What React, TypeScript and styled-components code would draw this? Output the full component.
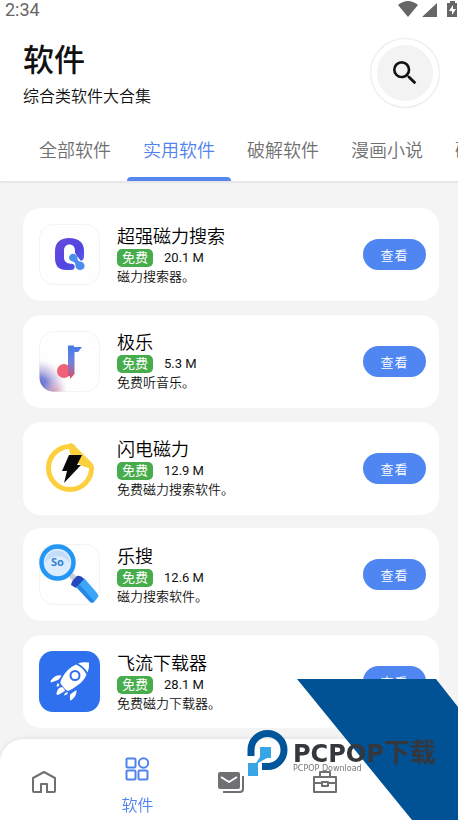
import React from "react";
import styled, { createGlobalStyle } from "styled-components";
import { MdSearch } from "react-icons/md";

const GlobalStyle = createGlobalStyle`
  * { box-sizing: border-box; }
  body {
    margin: 0;
    background: #f4f4f4;
    color: #111;
    font-family: Roboto, "Noto Sans CJK SC", sans-serif;
  }
  button { font-family: inherit; border: 0; padding: 0; cursor: pointer; }
`;

const Page = styled.div`
  min-height: 100vh;
  display: flex;
  flex-direction: column;
  overflow: hidden;
`;

const Header = styled.header`
  background: #fff;
  border-bottom: 1px solid #e4e4e4;
  box-shadow: 0 1px 2px rgba(0, 0, 0, 0.06);
`;

const StatusBar = styled.div`
  height: 20px;
  display: flex;
  align-items: center;
  justify-content: space-between;
  padding-left: 5px;
  color: #666;
  font-size: 18px;
  line-height: 20px;
`;

const StatusIcons = styled.svg`
  width: 60px;
  height: 20px;
  fill: #666;
`;

const TitleRow = styled.div`
  display: flex;
  align-items: center;
  justify-content: space-between;
  padding: 16px 19px 0 23px;
`;

const Title = styled.h1`
  margin: 0;
  padding-top: 3px;
  font-size: 31px;
  line-height: 44px;
  font-weight: 500;
`;

const Subtitle = styled.p`
  margin: 0;
  padding-top: 2px;
  font-size: 16px;
  line-height: 24px;
  font-weight: 350;
`;

const SearchButton = styled.button`
  width: 68px;
  height: 68px;
  border: 6px solid #fff;
  border-radius: 50%;
  background: #f3f3f3;
  box-shadow: 0 0 2px rgba(0, 0, 0, 0.25);
  display: grid;
  place-items: center;
  color: #111;
  font-size: 32px;
`;

const Tabs = styled.nav`
  display: flex;
  padding-left: 23px;
  margin-top: 11px;
  overflow: hidden;
`;

const Tab = styled.button<{ $active?: boolean }>`
  flex: none;
  height: 61px;
  padding: 0 16px;
  background: none;
  font-size: 18px;
  line-height: 24px;
  font-weight: 350;
  color: ${(p) => (p.$active ? "#4f83ee" : "#707070")};
  position: relative;
  &::after {
    content: "";
    display: ${(p) => (p.$active ? "block" : "none")};
    position: absolute;
    left: 0;
    right: 0;
    bottom: 0;
    height: 4px;
    border-radius: 4px 4px 0 0;
    background: #5687ee;
  }
`;

const AppList = styled.ul`
  flex: 1;
  list-style: none;
  margin: 0;
  padding: 26px 19px 92px 23px;
  display: flex;
  flex-direction: column;
  justify-content: space-between;
  gap: 13px;
`;

const Card = styled.li`
  display: flex;
  align-items: center;
  gap: 17px;
  padding: 16px 13px 16px 16px;
  background: #fff;
  border-radius: 18px;
`;

const AppIcon = styled.svg`
  flex: none;
  width: 61px;
  height: 61px;
`;

const Info = styled.div`
  flex: 1;
  margin-bottom: -2px;
`;

const Name = styled.h2`
  margin: 0;
  font-size: 18px;
  line-height: 24px;
  font-weight: 350;
  color: #000;
`;

const Meta = styled.div`
  display: flex;
  align-items: center;
  gap: 11px;
  font-size: 13px;
  line-height: 18px;
`;

const Badge = styled.span`
  padding: 0 5px;
  border-radius: 5px;
  background: #47ac4b;
  color: #fff;
`;

const Description = styled.p`
  margin: 0;
  font-size: 13px;
  line-height: 20px;
  font-weight: 350;
`;

const ViewButton = styled.button`
  width: 63px;
  height: 31px;
  border-radius: 16px;
  background: #5086f2;
  color: #fff;
  font-size: 13px;
  font-weight: 350;
  letter-spacing: 1px;
`;

const BottomBar = styled.footer`
  position: fixed;
  left: 0;
  right: 0;
  bottom: 0;
  background: #fff;
  border-radius: 24px 24px 0 0;
  box-shadow: 0 -1px 5px rgba(0, 0, 0, 0.08);
`;

const NavItems = styled.nav`
  display: grid;
  grid-template-columns: repeat(5, 1fr);
  height: 81px;
  margin: 0 -7px 0 -3px;
`;

const NavButton = styled.button<{ $active?: boolean }>`
  display: flex;
  flex-direction: column;
  align-items: center;
  justify-content: center;
  gap: 13px;
  padding-top: ${(p) => (p.$active ? 16 : 5)}px;
  background: none;
  font-size: 16px;
  line-height: 24px;
  font-weight: 350;
  color: ${(p) => (p.$active ? "#4f83ee" : "#707073")};
`;

const NavIcon = styled.svg`
  flex: none;
  width: 28px;
  height: 24px;
  fill: none;
  stroke: currentColor;
  stroke-width: 2;
  stroke-linejoin: round;
`;

const Watermark = styled.div`
  position: fixed;
  right: 0;
  bottom: 0;
  width: 211px;
  height: 141px;
  pointer-events: none;
`;

const Ribbon = styled.svg`
  position: absolute;
  inset: 0;
  width: 211px;
  height: 141px;
`;

const Brand = styled.div`
  position: absolute;
  left: 46px;
  top: 62px;
  white-space: nowrap;
  color: #34383c;
`;

const BrandName = styled.div`
  font: 700 24px/19px "DejaVu Sans", sans-serif;
`;

const BrandSuffix = styled.span`
  font: 700 26px/19px "Noto Sans CJK SC", sans-serif;
`;

const BrandNote = styled.div`
  font: 8px/10px "DejaVu Sans", sans-serif;
  color: #777;
`;

const Frame = ({ fill = "#fefefe" }: { fill?: string }) => (
  <rect x="0.5" y="0.5" width="60" height="60" rx="14" fill={fill} stroke="#f4f3f3" />
);

const MagnetIcon = () => (
  <AppIcon viewBox="0 0 61 61">
    <defs>
      <linearGradient id="magnet" x1="0" y1="0" x2="1" y2="1">
        <stop offset="0" stopColor="#6a4ad8" />
        <stop offset="0.6" stopColor="#5145e2" />
        <stop offset="1" stopColor="#4f6ae8" />
      </linearGradient>
    </defs>
    <Frame />
    <path
      d="M32 46H27C19 46 16 41 16 34V27C16 19 21 14 30 14C40 14 45 19 45 27V32Q45 36 42 37L38 32Q37 30 36 29V27C36 23 34 20.500 30.500 20.500C27 20.500 25 23 25 27V33C25 37 27 39 30 39.500L34 40Q37 42 35 45Q34 46 32 46Z"
      fill="url(#magnet)"
    />
    <path
      d="M30 34C30 30 35 28 38 32C39 35 38 37 41 37.500C47 38 47 46 41.500 46C36 46 37 42 36 39C35 37 31 38 30 34Z"
      fill="#4c8cec"
    />
  </AppIcon>
);

const MusicIcon = () => (
  <AppIcon viewBox="0 0 61 61">
    <defs>
      <radialGradient id="glow" gradientUnits="userSpaceOnUse" cx="-1" cy="56" r="30">
        <stop offset="0" stopColor="#4a5fd0" />
        <stop offset="0.35" stopColor="#7379d2" stopOpacity="0.9" />
        <stop offset="0.7" stopColor="#c3b4dc" stopOpacity="0.5" />
        <stop offset="1" stopColor="#fff" stopOpacity="0" />
      </radialGradient>
      <radialGradient id="blush" gradientUnits="userSpaceOnUse" cx="15" cy="62" r="14">
        <stop offset="0" stopColor="#d88ba6" stopOpacity="0.8" />
        <stop offset="1" stopColor="#f6d0d6" stopOpacity="0" />
      </radialGradient>
      <linearGradient id="note" x1="0" y1="0" x2="0" y2="1">
        <stop offset="0" stopColor="#417be8" />
        <stop offset="0.5" stopColor="#7180dd" />
        <stop offset="1" stopColor="#df4b64" />
      </linearGradient>
    </defs>
    <Frame />
    <rect x="0.5" y="0.5" width="60" height="60" rx="14" fill="url(#glow)" />
    <rect x="0.5" y="0.5" width="60" height="60" rx="14" fill="url(#blush)" />
    <circle cx="25" cy="40" r="7" fill="#ed5268" fillOpacity="0.9" />
    <path d="M29 14.500H35V16H43L39 21H35.500V43L31 48V45H29Z" fill="url(#note)" />
  </AppIcon>
);

const BoltIcon = () => (
  <AppIcon viewBox="0 0 61 61">
    <circle cx="31" cy="30" r="21.5" fill="#fff" stroke="#fcd03c" strokeWidth="5" />
    <path d="M31 2L61 2V30H54Z" fill="#fff" />
    <path d="M31 5Q34 5 37 9L53 25Q55 27 55 30C49 31 40 28 34 20C30 15 29 10 31 5Z" fill="#fcd03c" />
    <path d="M30 17H43L38 27H42L25 45L28 33H23Z" fill="#080808" />
  </AppIcon>
);

const MagnifierIcon = () => (
  <AppIcon viewBox="0 0 61 61">
    <Frame />
    <path d="M30 33L34 29L40 35L36 39Z" fill="#c9cdd4" />
    <path d="M37 40L52 58Q54 60 56 57L59 53Q60 52 58 49L45 34Z" fill="#3ba6f8" />
    <path d="M32 41Q32 38 35 35L38 32Q42 31 45 35L37 44Z" fill="#2447bc" />
    <path d="M37 43L51 58Q54 60 55 57L41 41Z" fill="#2686e5" />
    <circle cx="18.5" cy="18.5" r="16" fill="#dcecff" stroke="#2496f3" strokeWidth="4.5" />
    <path d="M6 19A12.5 12.5 0 0 1 31 19C26 10 12 10 6 19Z" fill="#c2dcfa" />
    <text x="18.5" y="22" textAnchor="middle" fontFamily="Open Sans, sans-serif" fontWeight="700" fontSize="11" fill="#2e82d2">
      So
    </text>
  </AppIcon>
);

const RocketIcon = () => (
  <AppIcon viewBox="0 0 61 61">
    <rect width="61" height="61" rx="14" fill="#2f70ee" />
    <g fill="#fff">
      <path d="M39 12.500Q44 10.500 50 11.500Q50.500 17 48.500 21.500Q45 15.500 39 12.500Z" />
      <path d="M37 13.500Q44 16.500 47.500 23.500Q45 30 39 34Q34 38 29 40Q27 40 21.500 32.500Q21 31 22.500 28Q27 18 37 13.500Z" />
      <path d="M22.500 24.500Q21 28 19 29L12 31.500Q11 31 12 29.500Q16 23.500 22.500 24.500Z" />
      <path d="M37.500 39Q38 45 32 49.500Q30.500 49.500 31 47Q30 44 33 42Z" />
      <path d="M23 36Q26 38 26 40L19 44Q17 44 17.500 42Q19 36 23 36Z" />
      <path d="M18.500 32L20.500 33.500L19 36L17.500 35Z" />
      <path d="M26 42L29 41L28 43.500L25 44.500Z" />
    </g>
    <circle cx="36" cy="24.5" r="4.5" fill="#fff" stroke="#2f70ee" strokeWidth="2" />
  </AppIcon>
);

const apps = [
  { name: "超强磁力搜索", size: "20.1 M", text: "磁力搜索器。", Icon: MagnetIcon },
  { name: "极乐", size: "5.3 M", text: "免费听音乐。", Icon: MusicIcon },
  { name: "闪电磁力", size: "12.9 M", text: "免费磁力搜索软件。", Icon: BoltIcon },
  { name: "乐搜", size: "12.6 M", text: "磁力搜索软件。", Icon: MagnifierIcon },
  { name: "飞流下载器", size: "28.1 M", text: "免费磁力下载器。", Icon: RocketIcon },
];

const tabs = ["全部软件", "实用软件", "破解软件", "漫画小说", "破解游戏"];

export default function App() {
  return (
    <Page>
      <GlobalStyle />
      <Header>
        <StatusBar>
          <span>2:34</span>
          <StatusIcons viewBox="0 0 60 20" aria-hidden="true">
            <path d="M0 5Q10 -3 20 5L10 17Z" />
            <path d="M24 17L39 3V17Z" />
            <path
              fillRule="evenodd"
              d="M52 1H57V3H59V17H49V3H52ZM55 5L51 11H54V15L58 9H55Z"
            />
          </StatusIcons>
        </StatusBar>
        <TitleRow>
          <div>
            <Title>软件</Title>
            <Subtitle>综合类软件大合集</Subtitle>
          </div>
          <SearchButton aria-label="搜索">
            <MdSearch />
          </SearchButton>
        </TitleRow>
        <Tabs>
          {tabs.map((label) => (
            <Tab key={label} $active={label === "实用软件"}>
              {label}
            </Tab>
          ))}
        </Tabs>
      </Header>
      <AppList>
        {apps.map(({ name, size, text, Icon }) => (
          <Card key={name}>
            <Icon />
            <Info>
              <Name>{name}</Name>
              <Meta>
                <Badge>免费</Badge>
                <span>{size}</span>
              </Meta>
              <Description>{text}</Description>
            </Info>
            <ViewButton>查看</ViewButton>
          </Card>
        ))}
      </AppList>
      <BottomBar>
        <NavItems>
          <NavButton aria-label="首页">
            <NavIcon viewBox="0 0 28 24">
              <path d="M10 22H4Q3 22 3 21V8L14 2L25 8V21Q25 22 24 22H18M11 23V14H17V23" />
            </NavIcon>
          </NavButton>
          <NavButton $active>
            <NavIcon viewBox="0 0 28 24">
              <rect x="3.5" y="1.5" width="9" height="9" rx="1" />
              <circle cx="20.5" cy="6" r="4.7" />
              <rect x="3.5" y="13.5" width="9" height="9" rx="1" />
              <rect x="15.5" y="13.5" width="9" height="9" rx="1" />
            </NavIcon>
            软件
          </NavButton>
          <NavButton aria-label="消息">
            <NavIcon viewBox="0 0 28 24">
              <rect x="1" y="2" width="22" height="17" rx="2" fill="currentColor" stroke="none" />
              <path d="M4 7L12 12L20 7" stroke="#fff" />
              <path d="M6 22H23Q26 22 26 19V6" />
            </NavIcon>
          </NavButton>
          <NavButton aria-label="工具箱">
            <NavIcon viewBox="0 0 28 24">
              <path d="M9 7V2H19V7M3 7H25V22H3ZM3 13H11M17 13H25M11 12H17V16H11Z" />
            </NavIcon>
          </NavButton>
          <NavButton aria-label="我的" />
        </NavItems>
      </BottomBar>
      <Watermark>
        <Ribbon viewBox="0 0 211 141" aria-hidden="true">
          <path d="M50 0H189L211 28V141H165Z" fill="#005294" />
          <path
            d="M4 77V71A16.5 16.5 0 1 1 20.500 87.500H15"
            fill="none"
            stroke="#00569b"
            strokeWidth="7"
          />
          <path d="M13 68H24V79H20L11 84V97H1V84H9L13 78Z" fill="#38a6e5" />
        </Ribbon>
        <Brand>
          <BrandName>
            PCPOP<BrandSuffix>下载</BrandSuffix>
          </BrandName>
          <BrandNote>PCPOP Download</BrandNote>
        </Brand>
      </Watermark>
    </Page>
  );
}
